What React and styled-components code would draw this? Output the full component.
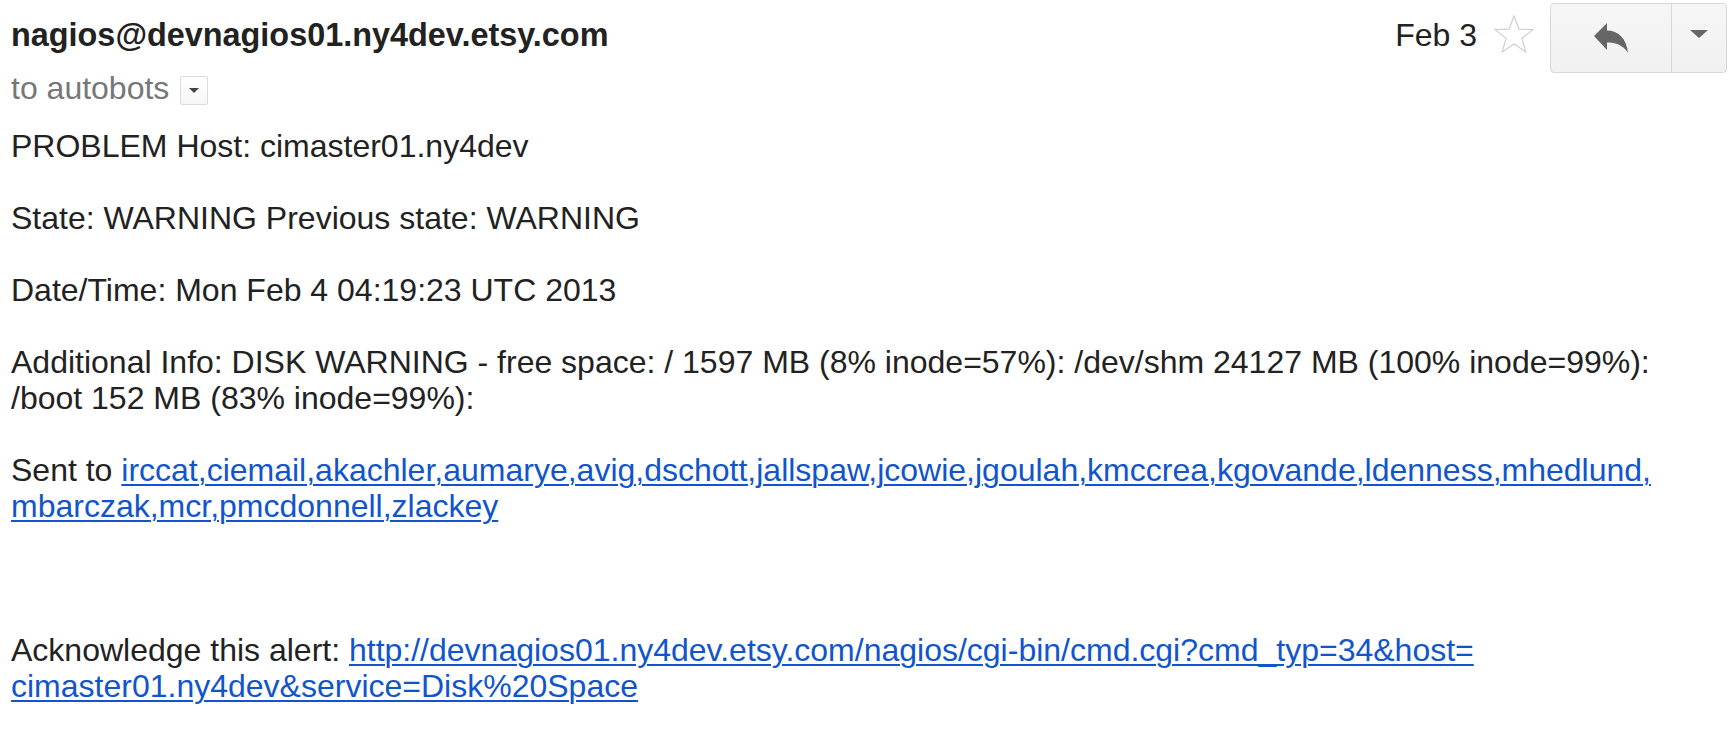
import React from 'react';
import styled, { createGlobalStyle } from 'styled-components';

const GlobalStyle = createGlobalStyle`
	body {
		margin: 0;
		background: #fff;
		font-family: 'Liberation Sans', Arial, Helvetica, sans-serif;
		color: #222;
	}
`;

const Page = styled.div`
	padding: 0 7px 0 11px;
	font-size: 32px;
	line-height: 36px;
`;

const Header = styled.div`
	display: flex;
	justify-content: space-between;
	align-items: flex-start;
`;

const Sender = styled.div`
	padding-top: 17px;
`;

const SenderName = styled.div`
	font-weight: bold;
	font-size: 32.4px;
	color: #222;
`;

const Recipients = styled.div`
	display: flex;
	align-items: center;
	margin-top: 17px;
	color: #777;
`;

const SmallMenu = styled.span`
	display: flex;
	align-items: center;
	justify-content: center;
	width: 26px;
	height: 27px;
	margin-left: 11px;
	margin-top: 4px;
	border: 1px solid #dcdcdc;
	border-radius: 2px;
	background: linear-gradient(#fff, #f6f6f6);
`;

const Caret = styled.span`
	width: 0;
	height: 0;
	border-left: ${({ size }) => size}px solid transparent;
	border-right: ${({ size }) => size}px solid transparent;
	border-top: ${({ size }) => Math.round(size * 0.9)}px solid ${({ color }) => color};
`;

const Actions = styled.div`
	display: flex;
	align-items: flex-start;
	margin-top: 3px;
`;

const DateLabel = styled.span`
	margin-top: 14px;
	color: #222;
`;

const StarButton = styled.span`
	display: block;
	width: 40px;
	height: 38px;
	margin: 12px 16px 0 17px;
`;

const ButtonGroup = styled.div`
	display: flex;
	height: 68px;
	border: 1px solid #d8d8d8;
	border-radius: 4px;
	background: linear-gradient(#f6f6f6, #f1f1f1);
	overflow: hidden;
`;

const GroupButton = styled.span`
	display: flex;
	align-items: center;
	justify-content: center;
	width: ${({ width }) => width}px;
	padding-bottom: ${({ lift }) => lift || 0}px;
	box-sizing: border-box;
	& + & {
		border-left: 1px solid #d8d8d8;
	}
`;

const Message = styled.div`
	margin-top: 22px;
`;

const Para = styled.p`
	margin: 0 0 ${({ gap }) => gap || 36}px;
`;

const Link = styled.a`
	color: #1155cc;
	text-decoration: underline;
	text-decoration-thickness: 2px;
	text-underline-offset: 3px;
`;

const recipients =
	'irccat,ciemail,akachler,aumarye,avig,dschott,jallspaw,jcowie,jgoulah,kmccrea,kgovande,ldenness,mhedlund,';

const ReplyIcon = () => (
	<svg width="34" height="30" viewBox="0 0 34 30">
		<path
			d="M0 13 L13 0 L13 7.5 C24 7.5 32.5 15 34 30 C29 22 22 19.5 13 19.5 L13 27 Z"
			fill="#666"
		/>
	</svg>
);

const StarIcon = () => (
	<svg width="40" height="38" viewBox="0 0 40 38">
		<polygon
			points="20,1 24.9,14.2 39,14.6 27.9,23.3 31.8,36.9 20,29 8.2,36.9 12.1,23.3 1,14.6 15.1,14.2"
			fill="none"
			stroke="#cfcfcf"
			strokeWidth="1.2"
			strokeLinejoin="miter"
		/>
	</svg>
);

export default function App() {
	return (
		<>
			<GlobalStyle />
			<Page>
				<Header>
					<Sender>
						<SenderName>nagios@devnagios01.ny4dev.etsy.com</SenderName>
						<Recipients>
							to autobots
							<SmallMenu>
								<Caret size={5} color="#444" />
							</SmallMenu>
						</Recipients>
					</Sender>
					<Actions>
						<DateLabel>Feb 3</DateLabel>
						<StarButton>
							<StarIcon />
						</StarButton>
						<ButtonGroup>
							<GroupButton width={120}>
								<ReplyIcon />
							</GroupButton>
							<GroupButton width={55} lift={8}>
								<Caret size={9} color="#666" />
							</GroupButton>
						</ButtonGroup>
					</Actions>
				</Header>
				<Message>
					<Para>PROBLEM Host: cimaster01.ny4dev</Para>
					<Para>State: WARNING Previous state: WARNING</Para>
					<Para>Date/Time: Mon Feb 4 04:19:23 UTC 2013</Para>
					<Para>
						Additional Info: DISK WARNING - free space: / 1597 MB (8% inode=57%): /dev/shm 24127 MB
						(100% inode=99%):
						<br />
						/boot 152 MB (83% inode=99%):
					</Para>
					<Para gap={108}>
						Sent to{' '}
						<Link href="#">
							{recipients}
							<br />
							mbarczak,mcr,pmcdonnell,zlackey
						</Link>
					</Para>
					<Para>
						Acknowledge this alert:{' '}
						<Link href="#">
							http://devnagios01.ny4dev.etsy.com/nagios/cgi-bin/cmd.cgi?cmd_typ=34&amp;host=
							<br />
							cimaster01.ny4dev&amp;service=Disk%20Space
						</Link>
					</Para>
				</Message>
			</Page>
		</>
	);
}
